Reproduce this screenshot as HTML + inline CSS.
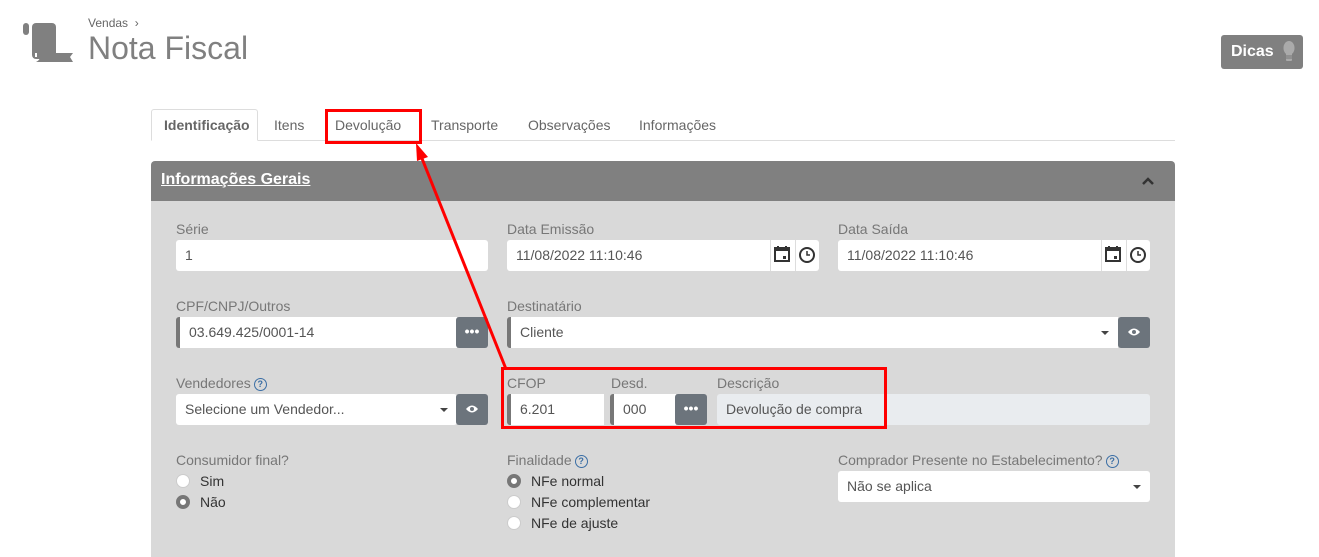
<!DOCTYPE html>
<html><head><meta charset="utf-8"><style>
*{box-sizing:border-box;margin:0;padding:0}
body{width:1319px;height:557px;background:#fff;font-family:"Liberation Sans",sans-serif;position:relative;overflow:hidden}
.a{position:absolute}
.lbl{position:absolute;font-size:14px;color:#777}
.in{position:absolute;background:#fff;border-radius:3px;height:31px;font-size:14px;color:#555;line-height:31px;padding-left:9px}
.lb{border-left:4px solid #777;border-radius:3px 0 0 3px}
.btn{position:absolute;background:#6c747c;border-radius:3px;width:32px;height:31px;color:#fff;text-align:center;line-height:29px;font-size:14px;font-weight:bold}
.tab{position:absolute;top:117px;font-size:14px;color:#666}
.q{display:inline-block;width:13px;height:13px;border:1.5px solid #3a6ea5;border-radius:50%;font-size:9px;color:#3a6ea5;text-align:center;line-height:10px;font-weight:bold;vertical-align:1px;margin-left:3px}
.r{position:absolute;width:14px;height:14px;border-radius:50%;background:#fff;border:1px solid #ccc}
.r.on{background:#fff;border:4px solid #777}
.rt{position:absolute;font-size:14px;color:#333}
.sel:after{content:"";position:absolute;right:9px;top:14px;border:4px solid transparent;border-top-color:#444;border-bottom:0}
</style></head><body>
<svg class="a" style="left:22px;top:21px" width="52" height="42" viewBox="0 0 52 42"><rect x="1" y="2" width="6" height="12" rx="3" fill="#808080"/><rect x="10" y="2" width="24" height="36" rx="4" fill="#808080"/><path d="M18 32h33l-3 4 3 5H14q4-2 4-5z" fill="#808080"/><path d="M14 32v4" stroke="#fff" stroke-width="2"/></svg>
<div class="a" style="left:88px;top:16px;font-size:12px;color:#666">Vendas &nbsp;›</div>
<div class="a" style="left:88px;top:30px;font-size:32px;color:#808080">Nota Fiscal</div>
<div class="a" style="left:1221px;top:35px;width:82px;height:34px;background:#808080;border-radius:3px;color:#fff;font-size:16px;font-weight:bold;line-height:33px;padding-left:10px">Dicas<svg class="a" style="left:62px;top:6px" width="12" height="22" viewBox="0 0 12 22"><ellipse cx="6" cy="7" rx="5.5" ry="7" fill="#aaa"/><rect x="3" y="12" width="6" height="8" rx="1" fill="#aaa"/><path d="M3 15h6M3 17h6" stroke="#777"/></svg></div>
<div class="a" style="left:151px;top:140px;width:1024px;height:1px;background:#ddd"></div>
<div class="a" style="left:151px;top:109px;width:107px;height:32px;border:1px solid #ddd;border-bottom:1px solid #fff;border-radius:3px 3px 0 0;background:#fff"></div>
<div class="tab" style="left:164px;font-weight:bold;color:#666">Identificação</div>
<div class="tab" style="left:274px">Itens</div>
<div class="tab" style="left:335px">Devolução</div>
<div class="tab" style="left:431px">Transporte</div>
<div class="tab" style="left:528px">Observações</div>
<div class="tab" style="left:639px">Informações</div>
<div class="a" style="left:151px;top:161px;width:1024px;height:40px;background:#808080;border-radius:4px 4px 0 0"></div>
<div class="a" style="left:161px;top:171px;font-size:16px;font-weight:bold;color:#fff;text-decoration:underline">Informações Gerais</div>
<svg class="a" style="left:1141px;top:176px" width="14" height="10"><path d="M2 8l5-5 5 5" stroke="#333" stroke-width="2.5" fill="none"/></svg>
<div class="a" style="left:151px;top:201px;width:1024px;height:356px;background:#d9d9d9"></div>
<div class="lbl" style="left:176px;top:221px">Série</div>
<div class="in" style="left:176px;top:240px;width:312px">1</div>
<div class="lbl" style="left:507px;top:221px">Data Emissão</div>
<div class="in" style="left:507px;top:240px;width:312px">11/08/2022 11:10:46</div>
<div class="lbl" style="left:838px;top:221px">Data Saída</div>
<div class="in" style="left:838px;top:240px;width:312px">11/08/2022 11:10:46</div>
<svg class="a" style="left:770px;top:240px" width="49" height="31"><path d="M0.5 0v31M25.5 0v31" stroke="#ddd"/><rect x="5" y="8" width="14" height="13" fill="none" stroke="#333" stroke-width="2"/><rect x="5" y="8" width="14" height="3" fill="#333"/><path d="M8 6v4M16 6v4" stroke="#333" stroke-width="2"/><rect x="13" y="16" width="3" height="3" fill="#333"/><circle cx="37" cy="15" r="7" fill="none" stroke="#333" stroke-width="2"/><path d="M37 11v4h3" stroke="#333" stroke-width="1.5" fill="none"/></svg>
<svg class="a" style="left:1101px;top:240px" width="49" height="31"><path d="M0.5 0v31M25.5 0v31" stroke="#ddd"/><rect x="5" y="8" width="14" height="13" fill="none" stroke="#333" stroke-width="2"/><rect x="5" y="8" width="14" height="3" fill="#333"/><path d="M8 6v4M16 6v4" stroke="#333" stroke-width="2"/><rect x="13" y="16" width="3" height="3" fill="#333"/><circle cx="37" cy="15" r="7" fill="none" stroke="#333" stroke-width="2"/><path d="M37 11v4h3" stroke="#333" stroke-width="1.5" fill="none"/></svg>
<div class="lbl" style="left:176px;top:298px">CPF/CNPJ/Outros</div>
<div class="in lb" style="left:176px;top:317px;width:281px">03.649.425/0001-14</div>
<div class="btn" style="left:456px;top:317px">•••</div>
<div class="lbl" style="left:507px;top:298px">Destinatário</div>
<div class="in lb sel" style="left:507px;top:317px;width:611px">Cliente</div>
<div class="btn" style="left:1118px;top:317px"><svg width="14" height="10" style="margin-top:10px"><path d="M1 5q6-7 12 0q-6 7-12 0z" fill="#fff"/><circle cx="7" cy="5" r="2" fill="#6c747c"/></svg></div>
<div class="lbl" style="left:176px;top:375px">Vendedores<span class="q">?</span></div>
<div class="in sel" style="left:176px;top:394px;width:281px;color:#555">Selecione um Vendedor...</div>
<div class="btn" style="left:456px;top:394px"><svg width="14" height="10" style="margin-top:10px"><path d="M1 5q6-7 12 0q-6 7-12 0z" fill="#fff"/><circle cx="7" cy="5" r="2" fill="#6c747c"/></svg></div>
<div class="lbl" style="left:507px;top:375px">CFOP</div>
<div class="in lb" style="left:507px;top:394px;width:97px">6.201</div>
<div class="lbl" style="left:611px;top:375px">Desd.</div>
<div class="in lb" style="left:610px;top:394px;width:66px">000</div>
<div class="btn" style="left:675px;top:394px">•••</div>
<div class="lbl" style="left:717px;top:375px">Descrição</div>
<div class="in" style="left:717px;top:394px;width:433px;background:#e9ecef">Devolução de compra</div>
<div class="lbl" style="left:176px;top:452px">Consumidor final?</div>
<div class="r" style="left:176px;top:474px"></div><div class="rt" style="left:200px;top:473px">Sim</div>
<div class="r on" style="left:176px;top:495px"></div><div class="rt" style="left:200px;top:494px">Não</div>
<div class="lbl" style="left:507px;top:452px">Finalidade<span class="q">?</span></div>
<div class="r on" style="left:507px;top:474px"></div><div class="rt" style="left:531px;top:473px">NFe normal</div>
<div class="r" style="left:507px;top:495px"></div><div class="rt" style="left:531px;top:494px">NFe complementar</div>
<div class="r" style="left:507px;top:516px"></div><div class="rt" style="left:531px;top:515px">NFe de ajuste</div>
<div class="lbl" style="left:838px;top:452px">Comprador Presente no Estabelecimento?<span class="q">?</span></div>
<div class="in sel" style="left:838px;top:471px;width:312px">Não se aplica</div>
<div class="a" style="left:325px;top:109px;width:97px;height:35px;border:3px solid #f00"></div>
<div class="a" style="left:501px;top:367px;width:386px;height:62px;border:3px solid #f00"></div>
<svg class="a" style="left:0;top:0" width="1319" height="557"><path d="M506 369L421 156" stroke="#f00" stroke-width="3"/><path d="M416 143l12 14-11 4z" fill="#f00"/></svg>
</body></html>
